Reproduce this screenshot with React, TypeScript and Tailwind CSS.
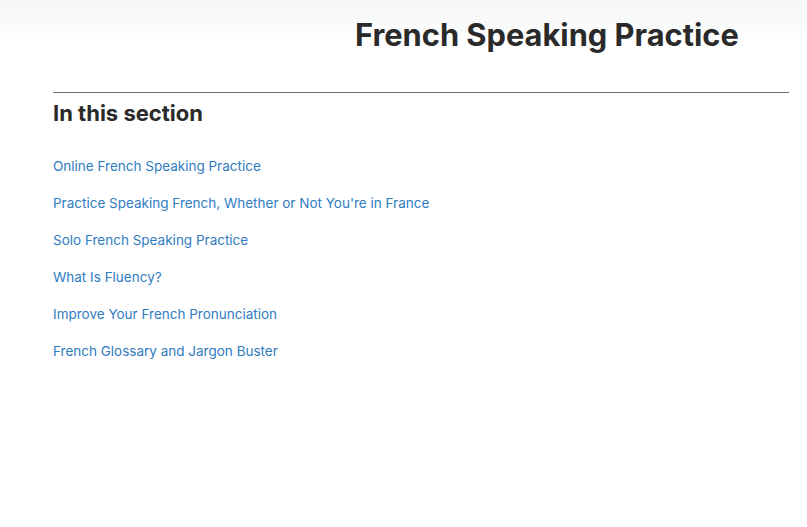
export default function App() {
  const links = [
    "Online French Speaking Practice",
    "Practice Speaking French, Whether or Not You're in France",
    "Solo French Speaking Practice",
    "What Is Fluency?",
    "Improve Your French Pronunciation",
    "French Glossary and Jargon Buster",
  ];
  return (
    <div className="relative w-[807px] h-[527px] bg-white overflow-hidden font-['Inter',sans-serif]">
      <div className="absolute left-0 top-0 w-full h-[40px] bg-gradient-to-b from-[#f6f7f7] via-[#f8f9f9] to-white" />
      <div className="relative">
        <h1 className="pl-[355px] pt-[16px] text-[30.8px] leading-[38px] font-bold text-[#2a2a2a]">
          French Speaking Practice
        </h1>
        <div className="ml-[53px] mr-[18px] mt-[38px] border-t border-[#6f6f6f]" />
        <h2 className="pl-[53px] pt-[6px] text-[22px] leading-[28px] font-bold text-[#2a2a2a]">
          In this section
        </h2>
        <ul className="pl-[53px] pt-[29px] flex flex-col gap-[17px]">
          {links.map((l) => (
            <li key={l} className="text-[13.5px] leading-[20px] text-[#2f7cbf]">
              <a href="#">{l}</a>
            </li>
          ))}
        </ul>
      </div>
    </div>
  );
}
